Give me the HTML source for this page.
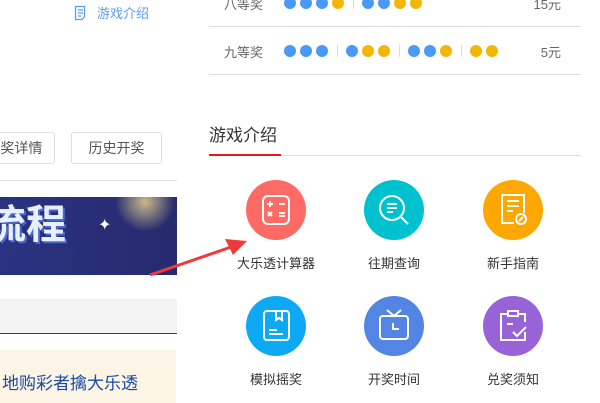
<!DOCTYPE html><html><head><meta charset="utf-8"><style>
body{margin:0;width:600px;height:403px;overflow:hidden;background:#fff;font-family:"Liberation Sans","Noto Sans CJK SC",sans-serif;position:relative}
.a{position:absolute}
.d{position:absolute;width:12px;height:12px;border-radius:50%}
.b{background:#4a9af5}.y{background:#f2b705}
.s{position:absolute;width:1px;height:12px;background:#ddd}
.c{position:absolute;width:60px;height:60px;border-radius:50%}
.l{position:absolute;width:120px;text-align:center;font-size:13px;color:#333}
</style></head><body>
<svg class="a" style="left:74px;top:5px" width="14" height="16" viewBox="0 0 14 16"><path d="M1.5 1.5h9v10l-2.5 3h-6.5z M4 5h5 M4 8h5 M4 11h3" fill="none" stroke="#5a9ef0" stroke-width="1.3"/></svg>
<div class="a" style="left:97px;top:3px;font-size:13px;color:#5a9ef0">游戏介绍</div>
<div class="a" style="left:-10px;top:132px;width:63px;height:30px;border:1px solid #ddd;border-radius:3px;font-size:14px;color:#555;line-height:30px;text-align:right">奖详情&nbsp;&nbsp;&nbsp;</div>
<div class="a" style="left:71px;top:132px;width:89px;height:30px;border:1px solid #ddd;border-radius:3px;font-size:14px;color:#555;line-height:30px;text-align:center">历史开奖</div>
<div class="a" style="left:0;top:180px;width:177px;height:1px;background:#ddd"></div>
<div class="a" style="left:0;top:197px;width:177px;height:78px;background:linear-gradient(90deg,#2b3280,#262a6e);overflow:hidden">
<div class="a" style="left:115px;top:-25px;width:60px;height:60px;border-radius:50%;background:radial-gradient(#c9b98a,rgba(200,180,130,0) 70%)"></div>
<div class="a" style="left:-14px;top:5px;font-size:40px;line-height:46px;font-weight:bold;color:#e8f0ff;text-shadow:2px 2px 0 #4a6ad0">流程</div>
<div class="a" style="left:98px;top:18px;color:#fff;font-size:16px">✦</div>
</div>
<div class="a" style="left:0;top:299px;width:177px;height:34px;background:#f3f3f3;border-bottom:1px solid #9b1a1a"></div>
<div class="a" style="left:0;top:350px;width:176px;height:53px;background:#fcf5e6"></div>
<div class="a" style="left:2px;top:369px;font-size:17px;color:#1a4aa0">地购彩者擒大乐透</div>
<svg class="a" style="left:145px;top:235px" width="110" height="45"><path d="M5 40 L92 10" stroke="#f03a3a" stroke-width="3"/><path d="M102 6 L80 4 L88 20z" fill="#f03a3a"/></svg>
<div class="a" style="left:224px;top:-6px;font-size:13px;color:#666">八等奖</div>
<div class="d b" style="left:284px;top:-3px"></div><div class="d b" style="left:300px;top:-3px"></div><div class="d b" style="left:316px;top:-3px"></div><div class="d y" style="left:332px;top:-3px"></div>
<div class="s" style="left:353px;top:-3px"></div>
<div class="d b" style="left:362px;top:-3px"></div><div class="d b" style="left:378px;top:-3px"></div><div class="d y" style="left:394px;top:-3px"></div><div class="d y" style="left:410px;top:-3px"></div>
<div class="a" style="left:520px;top:-6px;width:41px;text-align:right;font-size:13px;color:#666">15元</div>
<div class="a" style="left:209px;top:26px;width:372px;height:1px;background:#ddd"></div>
<div class="a" style="left:224px;top:42px;font-size:13px;color:#666">九等奖</div>
<div class="d b" style="left:284px;top:45px"></div><div class="d b" style="left:300px;top:45px"></div><div class="d b" style="left:316px;top:45px"></div>
<div class="s" style="left:337px;top:45px"></div>
<div class="d b" style="left:346px;top:45px"></div><div class="d y" style="left:362px;top:45px"></div><div class="d y" style="left:378px;top:45px"></div>
<div class="s" style="left:399px;top:45px"></div>
<div class="d b" style="left:408px;top:45px"></div><div class="d b" style="left:424px;top:45px"></div><div class="d y" style="left:440px;top:45px"></div>
<div class="s" style="left:461px;top:45px"></div>
<div class="d y" style="left:470px;top:45px"></div><div class="d y" style="left:486px;top:45px"></div>
<div class="a" style="left:520px;top:42px;width:41px;text-align:right;font-size:13px;color:#666">5元</div>
<div class="a" style="left:209px;top:74px;width:372px;height:1px;background:#ddd"></div>
<div class="a" style="left:209px;top:121px;font-size:17px;color:#333">游戏介绍</div>
<div class="a" style="left:209px;top:155px;width:372px;height:1px;background:#ddd"></div>
<div class="a" style="left:209px;top:154px;width:72px;height:2px;background:#e01b1b"></div>
<div class="c" style="left:246px;top:180px;background:#fe6b65"></div>
<svg class="a" style="left:246px;top:180px" width="60" height="60"><g fill="none" stroke="#fff" stroke-width="2"><rect x="17" y="16" width="26" height="28" rx="5"/><path d="M21 24h6M24 21v6M33 24h6M22 32l4 4M26 32l-4 4M33 33h6M33 36h6"/></g></svg>
<div class="c" style="left:364px;top:180px;background:#00c2cf"></div>
<svg class="a" style="left:364px;top:180px" width="60" height="60"><g fill="none" stroke="#fff" stroke-width="2"><circle cx="28" cy="28" r="12"/><path d="M37 37l7 7M23 24h10M23 28h10M23 32h6"/></g></svg>
<div class="c" style="left:483px;top:180px;background:#fda701"></div>
<svg class="a" style="left:483px;top:180px" width="60" height="60"><g fill="none" stroke="#fff" stroke-width="2"><path d="M31 43h-12v-28h22v18"/><path d="M24 21h12M24 26h12M24 31h6"/><circle cx="38" cy="39" r="5"/><path d="M36 41l4-4"/></g></svg>
<div class="c" style="left:246px;top:296px;background:#0ea9f4"></div>
<svg class="a" style="left:246px;top:296px" width="60" height="60"><g fill="none" stroke="#fff" stroke-width="2"><rect x="18" y="15" width="25" height="29" rx="3"/><path d="M30 15v9l3-2 3 2v-9M23 34h8M23 38h14"/></g></svg>
<div class="c" style="left:364px;top:296px;background:#5385e5"></div>
<svg class="a" style="left:364px;top:296px" width="60" height="60"><g fill="none" stroke="#fff" stroke-width="2"><path d="M23 14l7 6 7-6"/><rect x="16" y="20" width="28" height="23" rx="3"/><path d="M29 27v6h6"/></g></svg>
<div class="c" style="left:483px;top:296px;background:#9863d6"></div>
<svg class="a" style="left:483px;top:296px" width="60" height="60"><g fill="none" stroke="#fff" stroke-width="2"><path d="M24 18h-6v26h24v-8M36 18h6v8M25 15h10v5h-10z"/><path d="M30 36l4 4 9-9M24 28h6"/></g></svg>
<div class="l" style="left:216px;top:253px">大乐透计算器</div>
<div class="l" style="left:334px;top:253px">往期查询</div>
<div class="l" style="left:453px;top:253px">新手指南</div>
<div class="l" style="left:216px;top:369px">模拟摇奖</div>
<div class="l" style="left:334px;top:369px">开奖时间</div>
<div class="l" style="left:453px;top:369px">兑奖须知</div>
</body></html>
